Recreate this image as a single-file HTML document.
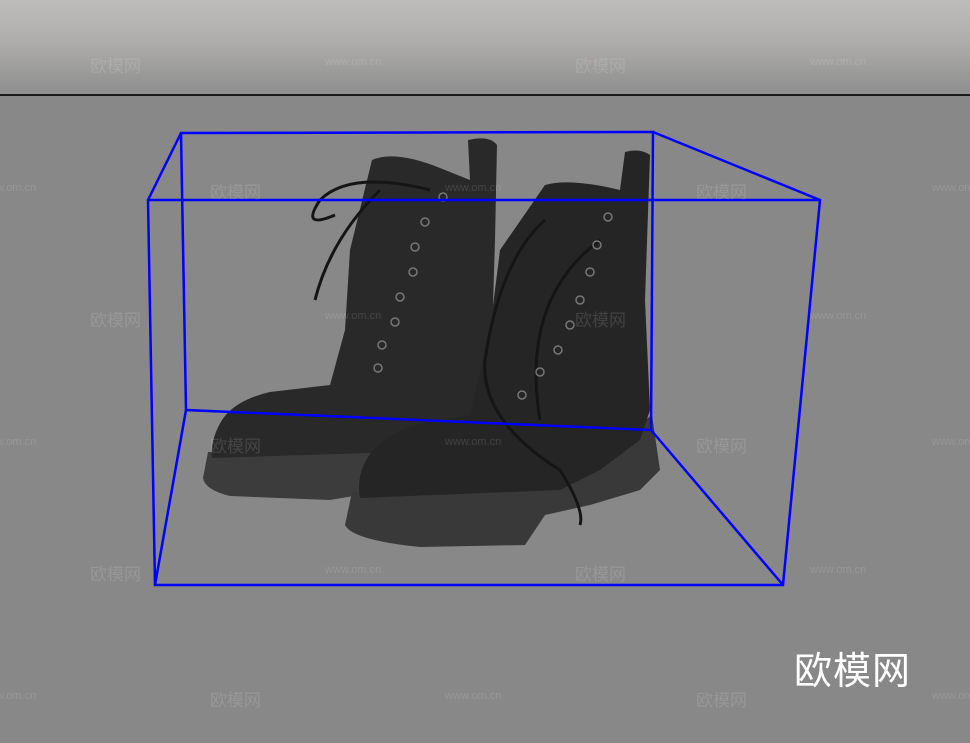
<!DOCTYPE html>
<html><head><meta charset="utf-8"><style>
html,body{margin:0;padding:0}
body{width:970px;height:743px;position:relative;overflow:hidden;background:#888;font-family:"Liberation Sans","Noto Sans CJK SC",sans-serif}
.top{position:absolute;left:0;top:0;width:970px;height:95px;background:linear-gradient(#bdbcba,#b0afad 40%,#8e8e8e)}
.line{position:absolute;left:0;top:94px;width:970px;height:2px;background:#1a1a1a}
.w{position:absolute;color:rgba(255,255,255,.13);font-size:17px;white-space:nowrap}
.u{position:absolute;color:rgba(255,255,255,.13);font-size:11px;white-space:nowrap}
.big{position:absolute;left:794px;top:640px;font-size:38px;color:#fff;letter-spacing:1px}
svg{position:absolute;left:0;top:0}
</style></head><body>
<div class="top"></div><div class="line"></div>
<svg width="970" height="743">
<!-- left boot sole -->
<path d="M208 452 L400 448 L470 420 L485 438 L460 465 L400 488 L330 500 L230 496 Q205 490 203 478 Z" fill="#3c3c3c"/>
<!-- left boot upper -->
<path d="M372 160 Q395 150 440 168 L470 180 L468 140 Q490 135 497 145 L495 240 L490 400 L470 420 L400 452 L212 458 Q210 440 222 420 Q235 400 270 392 L330 385 L345 330 L350 250 Z" fill="#292929"/>
<!-- right boot sole -->
<path d="M352 492 L560 486 L652 415 L660 470 L640 490 L590 505 L545 515 L525 545 L420 547 Q352 540 345 525 Z" fill="#393939"/>
<!-- right boot upper -->
<path d="M545 185 Q570 178 620 190 L625 152 Q640 148 650 155 L645 300 L650 410 L640 440 L600 470 L560 490 L360 498 Q355 470 375 448 Q395 428 430 422 L470 415 L490 330 L500 250 Z" fill="#252525"/>
<g fill="none" stroke="#151515" stroke-width="3">
<path d="M430 190 Q350 170 320 200 Q300 230 335 215"/><path d="M380 190 Q330 240 315 300"/><path d="M545 220 Q500 260 485 360 Q480 420 560 470 Q585 510 580 525"/>
<path d="M600 240 Q520 300 540 420"/></g>
<g fill="none" stroke="#777" stroke-width="1.5">
<circle cx="443" cy="197" r="4"/><circle cx="425" cy="222" r="4"/><circle cx="415" cy="247" r="4"/><circle cx="413" cy="272" r="4"/><circle cx="400" cy="297" r="4"/><circle cx="395" cy="322" r="4"/><circle cx="382" cy="345" r="4"/><circle cx="378" cy="368" r="4"/>
<circle cx="608" cy="217" r="4"/><circle cx="597" cy="245" r="4"/><circle cx="590" cy="272" r="4"/><circle cx="580" cy="300" r="4"/><circle cx="570" cy="325" r="4"/><circle cx="558" cy="350" r="4"/><circle cx="540" cy="372" r="4"/><circle cx="522" cy="395" r="4"/></g>
<g stroke="#0000ff" stroke-width="2.5" fill="none">
<path d="M181 133 L653 132 L651 430 L186 410 Z"/>
<path d="M148 200 L820 200 L783 585 L155 585 Z"/>
<path d="M181 133 L148 200 M653 132 L820 200 M186 410 L155 585 M651 430 L783 585"/>
</g>
</svg>
<div class="w" style="left:90px;top:52px">欧模网</div><div class="u" style="left:325px;top:56px">www.om.cn</div><div class="w" style="left:575px;top:52px">欧模网</div><div class="u" style="left:810px;top:56px">www.om.cn</div>
<div class="u" style="left:-20px;top:182px">www.om.cn</div><div class="w" style="left:210px;top:178px">欧模网</div><div class="u" style="left:445px;top:182px">www.om.cn</div><div class="w" style="left:696px;top:178px">欧模网</div><div class="u" style="left:932px;top:182px">www.om.cn</div>
<div class="w" style="left:90px;top:306px">欧模网</div><div class="u" style="left:325px;top:310px">www.om.cn</div><div class="w" style="left:575px;top:306px">欧模网</div><div class="u" style="left:810px;top:310px">www.om.cn</div>
<div class="u" style="left:-20px;top:436px">www.om.cn</div><div class="w" style="left:210px;top:432px">欧模网</div><div class="u" style="left:445px;top:436px">www.om.cn</div><div class="w" style="left:696px;top:432px">欧模网</div><div class="u" style="left:932px;top:436px">www.om.cn</div>
<div class="w" style="left:90px;top:560px">欧模网</div><div class="u" style="left:325px;top:564px">www.om.cn</div><div class="w" style="left:575px;top:560px">欧模网</div><div class="u" style="left:810px;top:564px">www.om.cn</div>
<div class="u" style="left:-20px;top:690px">www.om.cn</div><div class="w" style="left:210px;top:686px">欧模网</div><div class="u" style="left:445px;top:690px">www.om.cn</div><div class="w" style="left:696px;top:686px">欧模网</div><div class="u" style="left:932px;top:690px">www.om.cn</div>
<div class="big">欧模网</div>
</body></html>
